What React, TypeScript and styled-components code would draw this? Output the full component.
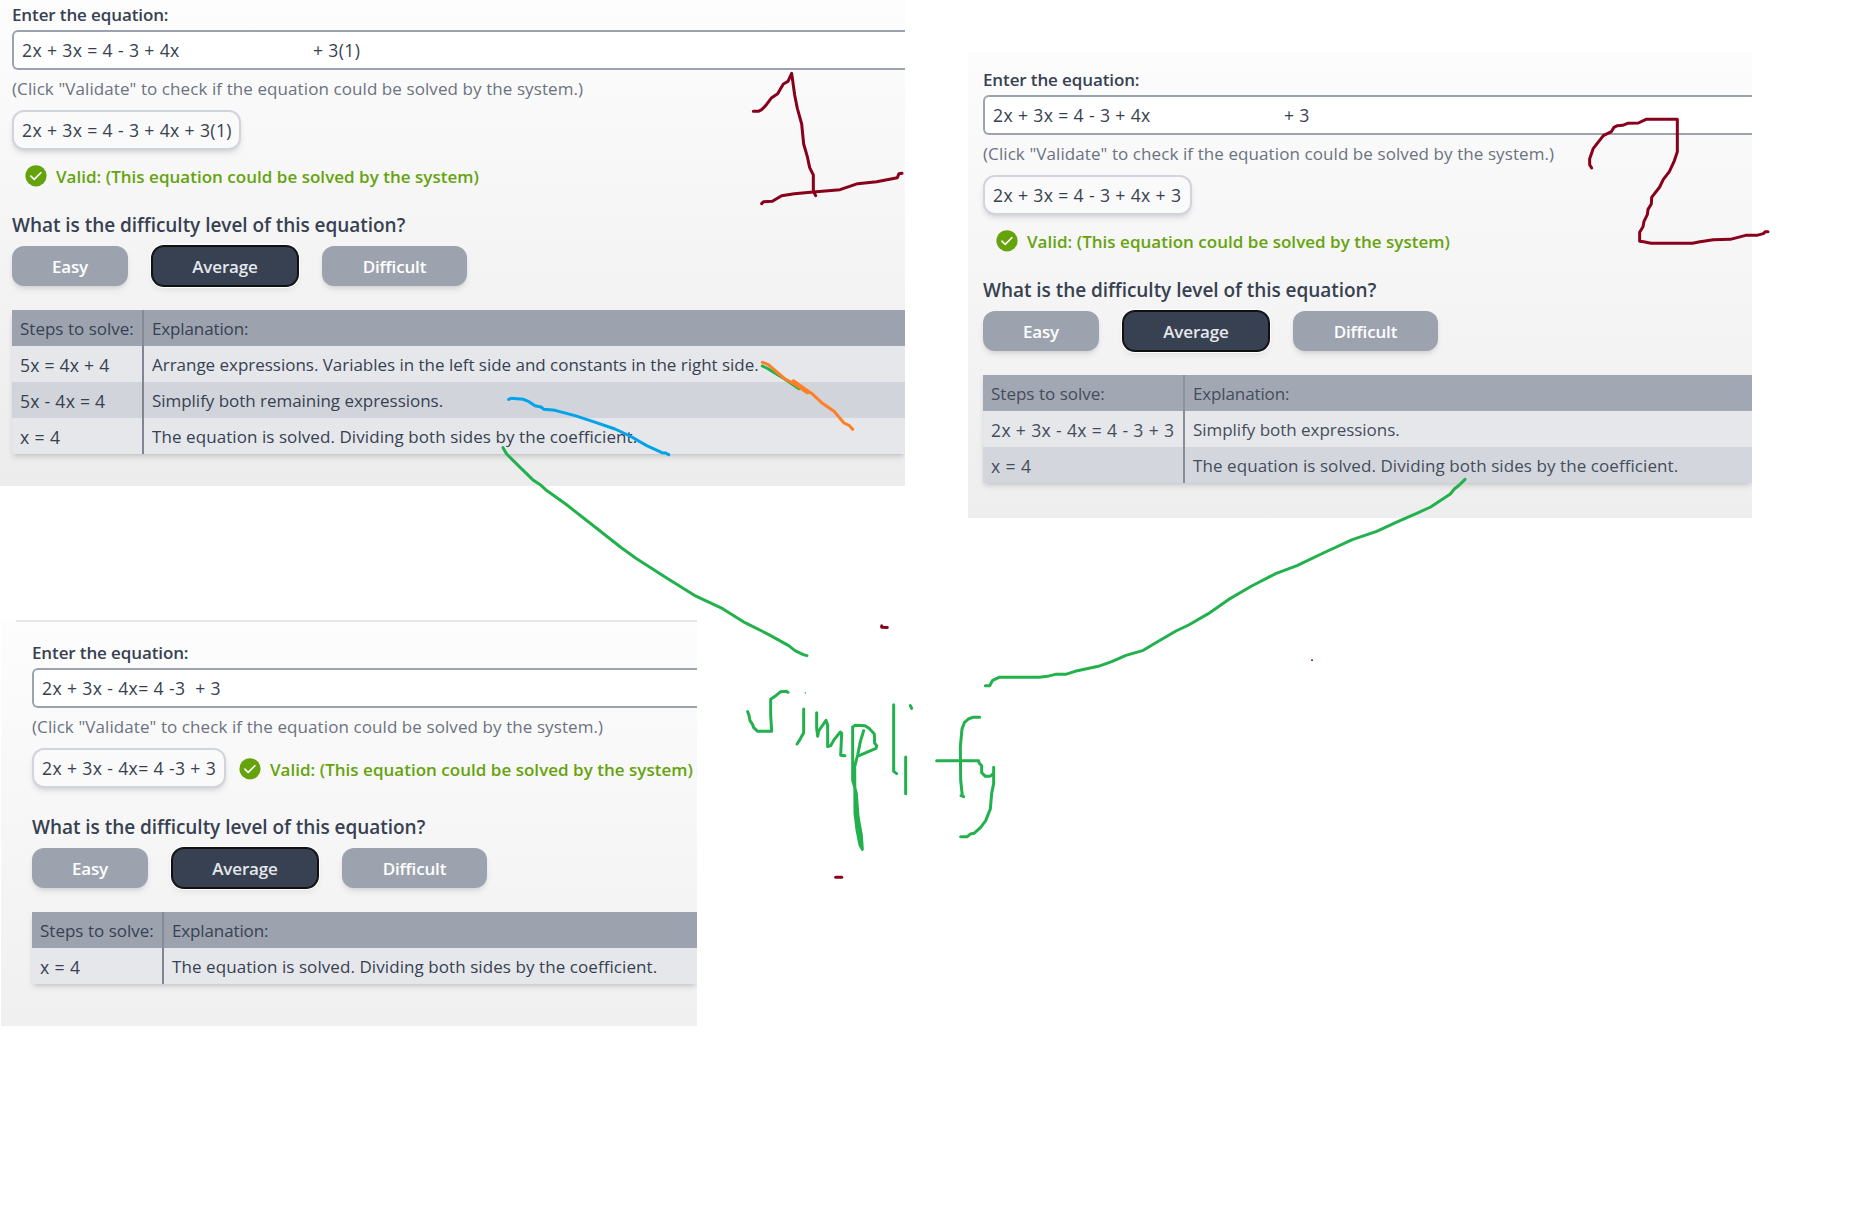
import React from "react";
import styled, { createGlobalStyle, css } from "styled-components";

const GlobalStyle = createGlobalStyle`
  body {
    margin: 0;
    background: #fff;
  }
  *, *::before, *::after {
    box-sizing: border-box;
  }
`;

const Board = styled.main`
  position: relative;
  width: 1856px;
  height: 1212px;
  overflow: hidden;
  background: #fff;
  color: #374151;
  font-family: "Open Sans", "Noto Sans", sans-serif;
  font-size: 17px;
  line-height: 24px;
  white-space: pre;
`;

/* A snippet pasted anywhere on the free drawing board. */
const Snippet = styled.section<{
  $x: number;
  $y: number;
  $w: number;
  $h: number;
  $inset: number;
  $top: number;
  $from: string;
  $to: string;
}>`
  position: absolute;
  left: ${(p) => p.$x}px;
  top: ${(p) => p.$y}px;
  width: ${(p) => p.$w}px;
  height: ${(p) => p.$h}px;
  padding: ${(p) => p.$top}px 0 0 ${(p) => p.$inset}px;
  overflow: hidden;
  background: linear-gradient(${(p) => p.$from}, ${(p) => p.$to});
`;

const TopRule = styled.hr`
  height: 2px;
  margin: 0 0 16px -16px;
  border: 0;
  background: #e5e7eb;
`;

const Label = styled.div`
  padding: 3px 0;
  font-weight: 600;
  letter-spacing: -0.12px;
`;

const mathText = css`
  font-size: 17.6px;
  letter-spacing: 0.365px;
`;

const Field = styled.div`
  ${mathText}
  display: flex;
  align-items: center;
  height: 40px;
  padding-left: 8px;
  border: 2px solid #9ca3af;
  border-right: 0;
  border-radius: 6px 0 0 6px;
  background: #fff;
`;

const Hint = styled.div`
  margin: 7px 0 9px;
  color: #6b7280;
  letter-spacing: 0.085px;
`;

const Result = styled.div<{ $inline?: boolean }>`
  display: flex;
  flex-direction: ${(p) => (p.$inline ? "row" : "column")};
  align-items: ${(p) => (p.$inline ? "center" : "flex-start")};
  gap: ${(p) => (p.$inline ? 13 : 14)}px;
  height: ${(p) => (p.$inline ? 42 : 78)}px;
`;

const Pill = styled.div<{ $w: number }>`
  ${mathText}
  display: flex;
  flex: none;
  align-items: center;
  align-self: flex-start;
  width: ${(p) => p.$w}px;
  height: 40px;
  padding-left: 8px;
  border: 2px solid #d1d5db;
  border-radius: 12px;
  box-shadow: 0 4px 6px -1px rgba(0, 0, 0, 0.1), 0 2px 4px -2px rgba(0, 0, 0, 0.1);
  background: #fafafa;
`;

const Status = styled.div<{ $indent: number }>`
  display: flex;
  align-items: center;
  gap: 9px;
  height: 24px;
  padding-left: ${(p) => p.$indent}px;
  color: #65a30d;
  font-weight: 600;
  letter-spacing: 0.02px;
`;

const StatusText = styled.span`
  padding-top: 2px;
`;

const StatusIcon = styled.svg`
  flex: none;
  width: 22px;
  height: 22px;
`;

const Question = styled.h2`
  margin: 23px 0 7px;
  font-size: 19px;
  font-weight: 600;
  line-height: 28px;
  letter-spacing: -0.04px;
`;

const Levels = styled.div`
  display: flex;
  gap: 24px;
`;

const Level = styled.button<{ $w: number; $active?: boolean }>`
  width: ${(p) => p.$w}px;
  height: 40px;
  padding: 2px 0 0;
  border: 0;
  border-radius: 12px;
  background: ${(p) => (p.$active ? "#374151" : "#9ca3af")};
  color: ${(p) => (p.$active ? "#e5e7eb" : "#fff")};
  font: inherit;
  font-weight: 600;
  letter-spacing: -0.15px;
  box-shadow: ${(p) =>
    p.$active
      ? "inset 0 0 0 1px #101010, 0 0 0 1px #101010, 0 0 0 2px #fff, 0 4px 6px 0 rgba(0,0,0,.08)"
      : "0 4px 6px -1px rgba(0,0,0,.1), 0 2px 4px -2px rgba(0,0,0,.1)"};
`;

const Steps = styled.div<{ $col: number; $faded?: boolean }>`
  display: grid;
  grid-template-columns: ${(p) => p.$col}px 1fr;
  grid-auto-rows: 36px;
  margin: 24px 0 0;
  opacity: ${(p) => (p.$faded ? 0.93 : 1)};
  box-shadow: 0 4px 6px -1px rgba(0, 0, 0, 0.12), 0 2px 4px -2px rgba(0, 0, 0, 0.12);
`;

const rowColors = { head: "#9ca3af", odd: "#e5e7eb", even: "#d1d5db" };
type Tone = keyof typeof rowColors;

const Cell = styled.div<{ $tone: Tone; $divided?: boolean; $math?: boolean; $track?: number }>`
  ${(p) => p.$math && mathText}
  display: flex;
  align-items: center;
  padding: 2px 0 0 8px;
  background: ${(p) => rowColors[p.$tone]};
  ${(p) => p.$divided && `border-right: 2px solid ${p.$tone === "head" ? "#868c97" : "#7f8692"};`}
  ${(p) => p.$track !== undefined && `letter-spacing: ${p.$track}px;`}
`;

const Ink = styled.svg`
  position: absolute;
  inset: 0;
  width: 1856px;
  height: 1212px;
  pointer-events: none;
  fill: none;
  stroke-width: 9;
  stroke-linecap: round;
  stroke-linejoin: round;
`;

interface Step {
  math: string;
  mathTrack: number;
  text: string;
  track: number;
}

interface SolverProps {
  input: string;
  result: string;
  resultWidth: number;
  inline?: boolean;
  column: number;
  faded?: boolean;
  steps: Step[];
}

function Solver({ input, result, resultWidth, inline, column, faded, steps }: SolverProps) {
  return (
    <>
      <Label>Enter the equation:</Label>
      <Field>{input}</Field>
      <Hint>(Click "Validate" to check if the equation could be solved by the system.)</Hint>
      <Result $inline={inline}>
        <Pill $w={resultWidth}>{result}</Pill>
        <Status $indent={inline ? 0 : 13}>
          <StatusIcon viewBox="0 0 22 22">
            <circle cx="11" cy="10.8" r="10.6" fill="#65a30d" />
            <path
              d="M5.9 11.1 9.2 14.4 15.9 7.7"
              fill="none"
              stroke="#fff"
              strokeWidth="1.6"
              strokeLinecap="round"
              strokeLinejoin="round"
            />
          </StatusIcon>
          <StatusText>Valid: (This equation could be solved by the system)</StatusText>
        </Status>
      </Result>
      <Question>What is the difficulty level of this equation?</Question>
      <Levels>
        <Level $w={116}>Easy</Level>
        <Level $w={146} $active>
          Average
        </Level>
        <Level $w={145}>Difficult</Level>
      </Levels>
      <Steps $col={column} $faded={faded}>
        <Cell $tone="head" $divided $track={0.01}>
          Steps to solve:
        </Cell>
        <Cell $tone="head" $track={-0.13}>
          Explanation:
        </Cell>
        {steps.map((s, i) => {
          const tone: Tone = i % 2 ? "even" : "odd";
          return (
            <React.Fragment key={s.math}>
              <Cell $tone={tone} $divided $math $track={s.mathTrack}>
                {s.math}
              </Cell>
              <Cell $tone={tone} $track={s.track}>
                {s.text}
              </Cell>
            </React.Fragment>
          );
        })}
      </Steps>
    </>
  );
}

const solved: Step = {
  math: "x = 4",
  mathTrack: 0.4,
  text: "The equation is solved. Dividing both sides by the coefficient.",
  track: 0.072,
};

const GAP = " ".repeat(27);

const MAROON = "#88001b";
const GREEN = "#22b14c";

/* Every group keeps its pen points in thirds of a pixel from its origin. */
const inkGroups: { x: number; y: number; lines: { c: string; w?: number; p: string }[] }[] = [
  {
    x: 460,
    y: 0,
    lines: [
      { c: MAROON, p: "880,334 895,334 905,329 917,317 935,293 953,281 970,252 984,244 995,220 1004,285 1012,325 1025,372 1031,432 1042,470 1049,503 1060,525 1060,573 1067,587" },
      { c: MAROON, p: "905,611 911,605 937,604 965,587 1003,581 1060,576 1140,569 1193,551 1250,545 1312,533 1317,521 1326,520" },
      { c: GREEN, p: "907,1098 920,1104 975,1138 1017,1166" },
      { c: "#ff7f27", p: "907,1087 925,1094 975,1137 1000,1150 1055,1180 1085,1208 1122,1234 1152,1269 1167,1276 1178,1288" },
      { c: "#ff7f27", w: 15, p: "1001,1146 1042,1175" },
      { c: "#00a2e8", p: "146,1198 153,1195 190,1198 207,1205 225,1217 243,1221 252,1228 285,1231 345,1247 400,1265 465,1287 510,1308 560,1337 606,1358 617,1359 626,1364" },
    ],
  },
  {
    x: 480,
    y: 430,
    lines: [
      { c: GREEN, p: "69,53 80,72 112,104 158,149 183,166 197,179 257,222 345,291 425,354 470,386 560,444 643,496 728,536 795,578 865,613 926,647 945,662 970,674 981,677" },
    ],
  },
  {
    x: 970,
    y: 470,
    lines: [
      { c: GREEN, p: "46,647 59,647 68,631 87,622 208,622 232,619 256,613 287,613 315,604 385,589 425,575 468,556 520,541 560,517 618,483 656,465 715,431 775,389 845,348 917,311 981,287 1060,249 1147,209 1220,184 1285,154 1340,130 1382,111 1441,72 1453,57 1468,45 1485,28" },
      { c: MAROON, w: 5.5, p: "1026,570.5 1026.1,570.5" },
    ],
  },
  {
    x: 720,
    y: 600,
    lines: [
      { c: GREEN, p: "83,335 87,346 90,362 98,374 101,383 113,394 155,394 152,345 152,298 165,289 182,275 200,274 204,277" },
      { c: GREEN, w: 4.5, p: "256,279 256.1,279" },
      { c: GREEN, p: "251,327 251,398 236,425 231,432" },
      { c: GREEN, p: "290,338 290,385 293,409 296,393 318,361 323,375 323,440 332,437 343,418 361,396 365,400 362,466 375,467" },
      { c: GREEN, p: "431,392 421,425 413,465 404,500 405,640 411,690 420,735 427,748 424,705 414,650 409,580 398,540 398,381 406,376 435,377 447,385 463,402 464,430 470,437 468,445 412,469" },
      { c: GREEN, p: "407,600 417,680 424,738" },
      { c: GREEN, p: "521,314 521,514 530,521" },
      { c: GREEN, p: "557,471 557,581" },
      { c: GREEN, p: "571,317 575,325" },
      { c: GREEN, p: "779,352 758,352 745,357 733,368 726,387 721,440 722,540 727,588 723,587 731,590" },
      { c: GREEN, p: "650,482 776,482 777,488 785,498 785,518 796,529 810,529 819,522" },
      { c: GREEN, p: "821,502 821,550 815,580 811,627 797,662 782,682 762,700 751,702 742,710 722,710" },
      { c: MAROON, p: "485,77 485,82 502,82.5" },
      { c: MAROON, p: "347,832 365,832" },
    ],
  },
  {
    x: 1400,
    y: 80,
    lines: [
      { c: MAROON, p: "575,264 569,254 569,236 580,205 610,167 634,155 642,142 652,137 668,136 683,130 715,129 738,118 832,118 832,215 822,245 808,275 790,298 779,321 755,352 754,372 744,388 742,404 732,424 729,440 719,457 719,484 731,485 753,490 877,490 900,485 940,479 991,478 1037,466 1070,466 1090,461 1096,455 1104,455" },
    ],
  },
];

export default function App() {
  return (
    <>
      <GlobalStyle />
      <Board>
        <Snippet $x={0} $y={0} $w={905} $h={486} $inset={12} $top={0} $from="#fdfdfd" $to="#ececec">
          <Solver
            input={"2x + 3x = 4 - 3 + 4x" + GAP + "+ 3(1)"}
            result="2x + 3x = 4 - 3 + 4x + 3(1)"
            resultWidth={229}
            column={132}
            steps={[
              {
                math: "5x = 4x + 4",
                mathTrack: 0.22,
                text: "Arrange expressions. Variables in the left side and constants in the right side.",
                track: -0.022,
              },
              {
                math: "5x - 4x = 4",
                mathTrack: 0.25,
                text: "Simplify both remaining expressions.",
                track: -0.035,
              },
              solved,
            ]}
          />
        </Snippet>
        <Snippet $x={968} $y={52} $w={784} $h={466} $inset={15} $top={13} $from="#fcfcfc" $to="#eeeeee">
          <Solver
            input={"2x + 3x = 4 - 3 + 4x" + GAP + "+ 3"}
            result="2x + 3x = 4 - 3 + 4x + 3"
            resultWidth={209}
            column={202}
            faded
            steps={[
              {
                math: "2x + 3x - 4x = 4 - 3 + 3",
                mathTrack: 0.34,
                text: "Simplify both expressions.",
                track: -0.035,
              },
              solved,
            ]}
          />
        </Snippet>
        <Snippet $x={1} $y={619} $w={696} $h={407} $inset={31} $top={1} $from="#fdfdfd" $to="#f0f0f0">
          <TopRule />
          <Solver
            input="2x + 3x - 4x= 4 -3  + 3"
            result="2x + 3x - 4x= 4 -3 + 3"
            resultWidth={194}
            inline
            column={132}
            steps={[solved]}
          />
        </Snippet>
        <Ink viewBox="0 0 1856 1212">
          {inkGroups.map((g) => (
            <g key={`${g.x}-${g.y}`} transform={`translate(${g.x} ${g.y}) scale(${1 / 3})`}>
              {g.lines.map((l) => (
                <polyline key={l.p} points={l.p} stroke={l.c} strokeWidth={l.w ?? 9} />
              ))}
            </g>
          ))}
        </Ink>
      </Board>
    </>
  );
}
